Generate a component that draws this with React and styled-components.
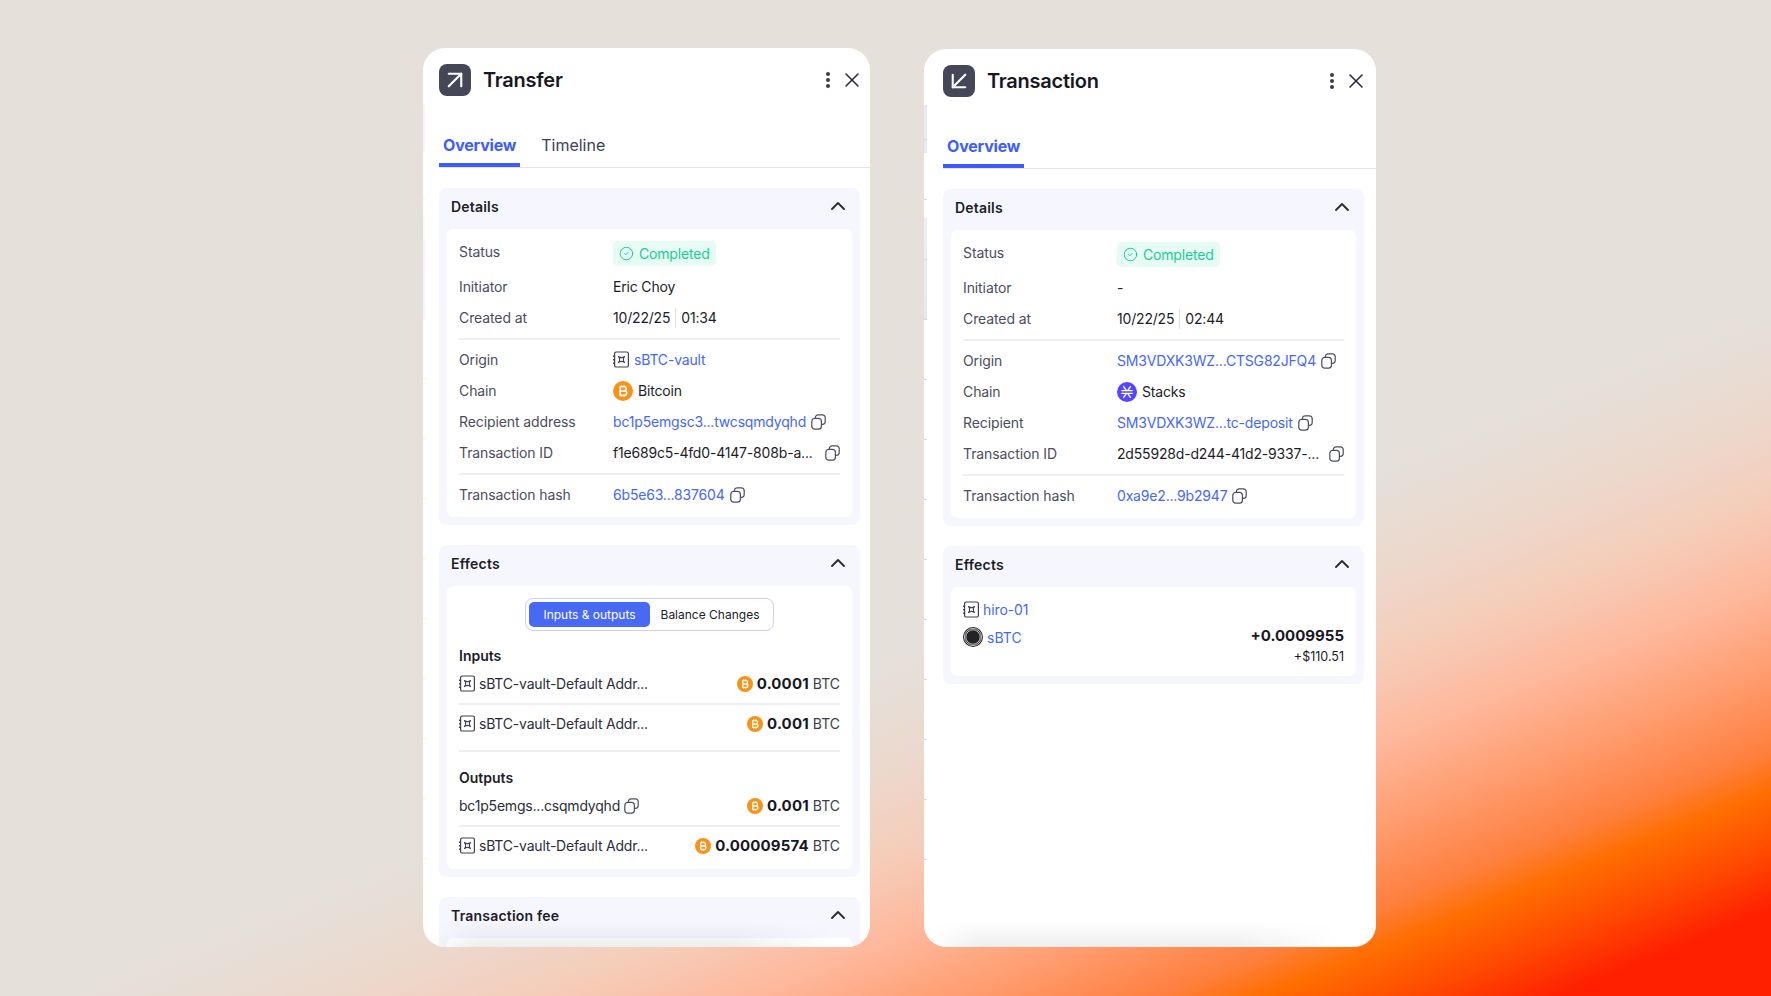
import React from "react";
import styled, { createGlobalStyle } from "styled-components";
import { ArrowUpRight, ArrowDownLeft, X, ChevronUp, CircleCheck } from "lucide-react";

const GlobalStyle = createGlobalStyle`
  html, body { margin: 0; padding: 0; }
  body {
    font-family: "Inter", "Noto Sans", sans-serif;
    color: #1c1d26;
  }
`;

const Page = styled.div`
  width: 1771px;
  height: 996px;
  box-sizing: border-box;
  overflow: hidden;
  display: flex;
  align-items: flex-start;
  gap: 54px;
  padding: 48px 0 0 423px;
  background: linear-gradient(
    158deg,
    #e5e0da 60%,
    #ecd8cc 66%,
    #f5cdb9 71%,
    #feb89c 76%,
    #ff9c6e 81%,
    #ff8040 85.5%,
    #ff6e00 88%,
    #ff4a00 91.5%,
    #ff2000 95%,
    #ff2000 100%
  );
`;

const Card = styled.div`
  position: relative;
  box-sizing: border-box;
  width: ${(p) => p.$width}px;
  height: ${(p) => p.$height}px;
  margin-top: ${(p) => p.$top}px;
  padding: 16px 0 0 ${(p) => p.$left}px;
  background: #fff;
  border-radius: 22px;
  overflow: hidden;
`;

// the page behind the drawer peeks out along its left edge
const EdgeStrip = styled.div`
  position: absolute;
  left: 0;
  top: 56px;
  width: ${(p) => p.$width}px;
  height: 780px;
  opacity: ${(p) => p.$opacity};
  background:
    repeating-linear-gradient(to bottom, transparent 0 59px, #d6d7de 59px 60px) 0 -25px,
    linear-gradient(
      to bottom,
      #e8e9f2 0,
      #e8e9f2 48px,
      #fff 48px,
      #fff 113px,
      #eeeff6 113px,
      #e4e6f2 215px,
      #fff 215px
    );
`;

const BottomFade = styled.div`
  position: absolute;
  left: 0;
  right: 0;
  bottom: 0;
  height: 26px;
  background: linear-gradient(to bottom, rgba(0, 0, 0, 0), rgba(0, 0, 0, 0.065));
  mask-image: linear-gradient(to right, transparent 1%, #000 12%, #000 70%, transparent 92%);
`;

const Header = styled.div`
  display: flex;
  align-items: center;
  height: 32px;
  padding-right: ${(p) => p.$right}px;
`;

const HeaderIcon = styled.div`
  width: 32px;
  height: 32px;
  border-radius: 8px;
  background: #454759;
  color: #fff;
  display: flex;
  align-items: center;
  justify-content: center;
`;

const Title = styled.div`
  margin-left: 12px;
  flex: 1;
  font-size: 20px;
  font-weight: 600;
  letter-spacing: -0.25px;
  color: #17181f;
`;

const HeaderActions = styled.div`
  display: flex;
  align-items: center;
  gap: 9px;
  color: #2b2c38;
`;

const Tabs = styled.div`
  display: flex;
  gap: 17px;
  margin-top: 33px;
  border-bottom: 1px solid #e3e3e6;
`;

const Tab = styled.div`
  box-sizing: border-box;
  height: 38px;
  padding: 4px 4px 0;
  line-height: 24px;
  font-size: 16px;
  font-weight: ${(p) => (p.$active ? 700 : 400)};
  letter-spacing: ${(p) => (p.$active ? "-0.2px" : "0")};
  color: ${(p) => (p.$active ? "#3d5dfb" : "#3f4150")};
  border-bottom: 4px solid ${(p) => (p.$active ? "#3d5dfb" : "transparent")};
`;

const Stack = styled.div`
  display: flex;
  flex-direction: column;
  gap: 20px;
  margin-top: 20px;
  width: 421px;
`;

const Panel = styled.section`
  background: #f6f7fe;
  border-radius: 8px;
  padding: 0 8px 8px;
`;

const PanelHeader = styled.div`
  box-sizing: border-box;
  display: flex;
  align-items: center;
  justify-content: space-between;
  height: 41px;
  padding: 0 2px 5px 4px;
  font-size: 14px;
  font-weight: 600;
  letter-spacing: 0.2px;
  color: #1c1d26;
`;

const Inner = styled.div`
  display: flex;
  flex-direction: column;
  background: #fff;
  border-radius: 6px;
  padding: 12px 12px ${(p) => p.$bottom}px;
`;

const Row = styled.div`
  box-sizing: border-box;
  display: grid;
  grid-template-columns: 154px 1fr;
  align-items: center;
  min-height: 28px;
  margin-top: 3px;
  padding-bottom: 1px;
  font-size: 14px;
`;

const StatusRow = styled(Row)`
  min-height: 25px;
  margin: 0 0 4px;
  padding-bottom: 0;
`;

const Label = styled.div`
  color: #4b4d5c;
  letter-spacing: -0.1px;
  align-self: ${(p) => (p.$top ? "start" : "center")};
  margin-top: ${(p) => (p.$top ? "2px" : "0")};
`;

const Value = styled.div`
  display: flex;
  align-items: center;
  gap: 5px;
  min-width: 0;
  color: #1c1d26;
  letter-spacing: -0.18px;
  justify-content: ${(p) => (p.$spread ? "space-between" : "flex-start")};
`;

const LinkText = styled.span`
  color: #4668f5;
`;

const Badge = styled.div`
  display: inline-flex;
  align-items: center;
  gap: 5px;
  height: 25px;
  padding: 0 6px;
  border-radius: 5px;
  background: #e5fbf3;
  color: #1ccb9a;
`;

const DateSplit = styled.span`
  display: inline-block;
  height: 20px;
  border-left: 1px solid #e2e2e6;
`;

const Divider = styled.div`
  flex: none;
  height: 2px;
  background: #eeeef2;
  margin: ${(p) => p.$before}px 0 ${(p) => p.$after}px;
`;

const Toggle = styled.div`
  display: flex;
  align-self: center;
  box-sizing: border-box;
  height: 33px;
  padding: 3px;
  border: 1px solid #c9d2ea;
  border-radius: 8px;
`;

const ToggleItem = styled.div`
  display: flex;
  align-items: center;
  justify-content: center;
  width: ${(p) => p.$width}px;
  border-radius: 5px;
  font-size: 12px;
  background: ${(p) => (p.$active ? "#4769f6" : "transparent")};
  color: ${(p) => (p.$active ? "#fff" : "#1c1d26")};
`;

const GroupTitle = styled.div`
  margin-top: ${(p) => p.$top}px;
  line-height: 20px;
  font-size: 14px;
  font-weight: 600;
`;

const FlowRow = styled.div`
  box-sizing: border-box;
  display: flex;
  align-items: center;
  justify-content: space-between;
  height: 28px;
  margin-top: ${(p) => p.$top}px;
  padding-bottom: 1px;
  font-size: 14px;
`;

const Party = styled.div`
  display: flex;
  align-items: center;
  gap: 4px;
  letter-spacing: -0.2px;
  color: #2c2d38;
`;

const Amount = styled.div`
  display: flex;
  align-items: center;
  gap: 4px;
`;

const AmountValue = styled.span`
  font-size: 15px;
  font-weight: 700;
  letter-spacing: 0.15px;
  color: #17181f;
`;

const AmountUnit = styled.span`
  color: #3b3d4a;
`;

const EffectLine = styled.div`
  display: flex;
  align-items: center;
  gap: 4px;
  height: 20px;
  font-size: 14px;
  letter-spacing: -0.1px;
`;

const EffectSplit = styled.div`
  display: flex;
  justify-content: space-between;
  align-items: flex-start;
  margin-top: 6px;
`;

const Token = styled.div`
  display: flex;
  align-items: center;
  gap: 4px;
  margin-top: 2px;
  font-size: 14px;
`;

const Delta = styled.div`
  text-align: right;
  font-size: 15px;
  font-weight: 700;
  line-height: 22px;
  color: #17181f;
`;

const DeltaUsd = styled.div`
  font-size: 12.5px;
  font-weight: 400;
  line-height: 20px;
`;

const Kebab = () => (
  <svg width="6" height="18" viewBox="0 0 6 18" fill="#3a3b49">
    <circle cx="3" cy="3" r="2" />
    <circle cx="3" cy="9" r="2" />
    <circle cx="3" cy="15" r="2" />
  </svg>
);

const CopyIcon = () => (
  <svg width="15" height="16" viewBox="0 0 15 16" fill="none" stroke="#4b4d5c" strokeWidth="1.2" style={{ flex: "none" }}>
    <rect x="0.8" y="4.4" width="9.6" height="10.8" rx="3" />
    <path d="M4.4 4.4V3.4A2.6 2.6 0 0 1 7 0.8h4.6a2.6 2.6 0 0 1 2.6 2.6v4.2a2.8 2.8 0 0 1-2.8 2.8h-1" />
  </svg>
);

const VaultIcon = () => (
  <svg width="16" height="17" viewBox="0 0 16 17" fill="none" stroke="#3f4150" style={{ flex: "none" }}>
    <rect x="1.6" y="1" width="13.8" height="15" rx="1.6" strokeWidth="1.2" />
    <path d="M0.5 4.5v1.5M0.5 8v1.5M0.5 11.5V13" strokeWidth="1" />
    <path d="M5.5 5.5C7 7 10 7 11.5 5.5 10 7 10 10 11.5 11.5 10 10 7 10 5.5 11.5 7 10 7 7 5.5 5.5z" strokeWidth="1.1" strokeLinejoin="round" />
  </svg>
);

const BtcIcon = ({ size = 16 }) => (
  <svg width={size} height={size} viewBox="0 0 20 20" style={{ flex: "none" }}>
    <circle cx="10" cy="10" r="10" fill="#f7931a" />
    <path
      d="M7.2 5.8h3.9a2 2 0 0 1 0 4.2H7.2h4.4a2.1 2.1 0 0 1 0 4.2H7.2zM8.4 5.8V4.2M11 5.8V4.2M8.4 15.8v-1.6M11 15.8v-1.6"
      fill="none"
      stroke="#fff"
      strokeWidth="1.6"
      strokeLinejoin="round"
    />
  </svg>
);

const StacksIcon = () => (
  <svg width="20" height="20" viewBox="0 0 20 20" style={{ flex: "none" }}>
    <circle cx="10" cy="10" r="10" fill="#5546ff" />
    <path
      d="M4.8 8.6h10.4M4.8 11.4h10.4M6.6 4.6 9.4 8.6M13.4 4.6 10.6 8.6M6.6 15.4l2.8-4M13.4 15.4l-2.8-4"
      fill="none"
      stroke="#fff"
      strokeWidth="1.4"
      strokeLinecap="round"
    />
  </svg>
);

const SbtcIcon = () => (
  <svg width="20" height="20" viewBox="0 0 20 20" style={{ flex: "none" }}>
    <circle cx="10" cy="10" r="10" fill="#232326" />
    <circle cx="10" cy="10" r="8.6" fill="none" stroke="#fff" strokeWidth="0.7" />
    <circle cx="10" cy="10" r="7.2" fill="none" stroke="#fff" strokeWidth="0.7" />
  </svg>
);

function Section({ title, bottom, children }) {
  return (
    <Panel>
      <PanelHeader>
        {title}
        <ChevronUp size={24} color="#2b2c38" strokeWidth={1.9} />
      </PanelHeader>
      <Inner $bottom={bottom}>{children}</Inner>
    </Panel>
  );
}

function CardHeader({ icon, title, right }) {
  return (
    <Header $right={right}>
      <HeaderIcon>{icon}</HeaderIcon>
      <Title>{title}</Title>
      <HeaderActions>
        <Kebab />
        <X size={24} strokeWidth={1.6} />
      </HeaderActions>
    </Header>
  );
}

function Details({ d }) {
  return (
    <Section title="Details" bottom={8}>
      <StatusRow>
        <Label $top>Status</Label>
        <Value>
          <Badge>
            <CircleCheck size={15} strokeWidth={1.6} />
            Completed
          </Badge>
        </Value>
      </StatusRow>
      <Row>
        <Label>Initiator</Label>
        <Value>{d.initiator}</Value>
      </Row>
      <Row>
        <Label>Created at</Label>
        <Value>
          {d.date}
          <DateSplit />
          {d.time}
        </Value>
      </Row>
      <Divider $before={6} $after={3} />
      <Row>
        <Label>Origin</Label>
        <Value>{d.origin}</Value>
      </Row>
      <Row>
        <Label>Chain</Label>
        <Value>{d.chain}</Value>
      </Row>
      <Row>
        <Label>{d.recipientLabel}</Label>
        <Value>
          <LinkText>{d.recipient}</LinkText>
          <CopyIcon />
        </Value>
      </Row>
      <Row>
        <Label>Transaction ID</Label>
        <Value $spread>
          {d.txId}
          <CopyIcon />
        </Value>
      </Row>
      <Divider $before={6} $after={3} />
      <Row>
        <Label>Transaction hash</Label>
        <Value>
          <LinkText>{d.hash}</LinkText>
          <CopyIcon />
        </Value>
      </Row>
    </Section>
  );
}

function Flow({ top, party, value }) {
  return (
    <FlowRow $top={top}>
      <Party>{party}</Party>
      <Amount>
        <BtcIcon />
        <AmountValue>{value}</AmountValue>
        <AmountUnit>BTC</AmountUnit>
      </Amount>
    </FlowRow>
  );
}

const vaultParty = (
  <>
    <VaultIcon />
    sBTC-vault-Default Addr...
  </>
);

export default function App() {
  return (
    <Page>
      <GlobalStyle />
      <Card $width={447} $height={899} $top={0} $left={16}>
        <EdgeStrip $width={2} $opacity={0.4} />
        <CardHeader icon={<ArrowUpRight size={30} strokeWidth={1.7} />} title="Transfer" right={6} />
        <Tabs>
          <Tab $active>Overview</Tab>
          <Tab>Timeline</Tab>
        </Tabs>
        <Stack>
          <Details
            d={{
              initiator: "Eric Choy",
              date: "10/22/25",
              time: "01:34",
              origin: (
                <>
                  <VaultIcon />
                  <LinkText>sBTC-vault</LinkText>
                </>
              ),
              chain: (
                <>
                  <BtcIcon size={20} />
                  Bitcoin
                </>
              ),
              recipientLabel: "Recipient address",
              recipient: "bc1p5emgsc3...twcsqmdyqhd",
              txId: "f1e689c5-4fd0-4147-808b-a...",
              hash: "6b5e63...837604",
            }}
          />
          <Section title="Effects" bottom={9}>
            <Toggle>
              <ToggleItem $active $width={121}>Inputs &amp; outputs</ToggleItem>
              <ToggleItem $width={120}>Balance Changes</ToggleItem>
            </Toggle>
            <GroupTitle $top={15}>Inputs</GroupTitle>
            <Flow top={4} party={vaultParty} value="0.0001" />
            <Divider $before={5} $after={5} />
            <Flow top={0} party={vaultParty} value="0.001" />
            <Divider $before={12} $after={0} />
            <GroupTitle $top={16}>Outputs</GroupTitle>
            <Flow
              top={4}
              party={
                <>
                  bc1p5emgs...csqmdyqhd
                  <CopyIcon />
                </>
              }
              value="0.001"
            />
            <Divider $before={5} $after={5} />
            <Flow top={0} party={vaultParty} value="0.00009574" />
          </Section>
          <Section title="Transaction fee" bottom={40} />
        </Stack>
        <BottomFade />
      </Card>

      <Card $width={452} $height={898} $top={1} $left={19}>
        <EdgeStrip $width={3} $opacity={1} />
        <CardHeader icon={<ArrowDownLeft size={30} strokeWidth={1.7} />} title="Transaction" right={8} />
        <Tabs>
          <Tab $active>Overview</Tab>
        </Tabs>
        <Stack>
          <Details
            d={{
              initiator: "-",
              date: "10/22/25",
              time: "02:44",
              origin: (
                <>
                  <LinkText>SM3VDXK3WZ...CTSG82JFQ4</LinkText>
                  <CopyIcon />
                </>
              ),
              chain: (
                <>
                  <StacksIcon />
                  Stacks
                </>
              ),
              recipientLabel: "Recipient",
              recipient: "SM3VDXK3WZ...tc-deposit",
              txId: "2d55928d-d244-41d2-9337-...",
              hash: "0xa9e2...9b2947",
            }}
          />
          <Section title="Effects" bottom={9}>
            <EffectLine>
              <VaultIcon />
              <LinkText>hiro-01</LinkText>
            </EffectLine>
            <EffectSplit>
              <Token>
                <SbtcIcon />
                <LinkText>sBTC</LinkText>
              </Token>
              <Delta>
                +0.0009955
                <DeltaUsd>+$110.51</DeltaUsd>
              </Delta>
            </EffectSplit>
          </Section>
        </Stack>
        <BottomFade />
      </Card>
    </Page>
  );
}
